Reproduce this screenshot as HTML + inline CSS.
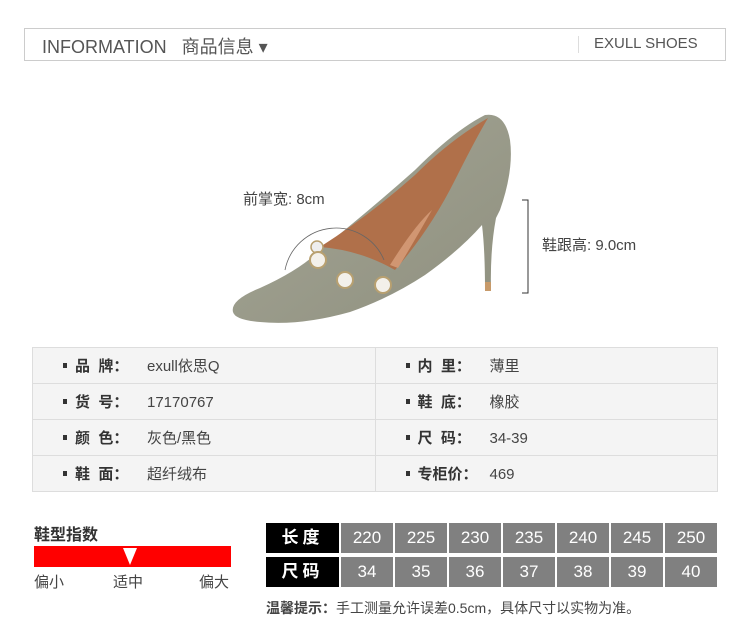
<!DOCTYPE html>
<html><head><meta charset="utf-8"><style>
*{margin:0;padding:0;box-sizing:border-box}
body{width:750px;height:642px;background:#fff;position:relative;font-family:"Liberation Sans","Noto Sans CJK SC",sans-serif;color:#555;overflow:hidden}
.a{position:absolute;white-space:nowrap}
.hdr{left:24px;top:28px;width:702px;height:33px;border:1px solid #ccc}
table.info{position:absolute;left:32px;top:347px;width:686px;border-collapse:collapse;background:#f4f4f4}
table.info td{border:1px solid #ddd;height:36px;font-size:15px;color:#444;padding-left:30px;width:343px}
table.info b{font-weight:bold;color:#333;display:inline-block;width:72px}
.sq{display:inline-block;width:4px;height:5px;background:#333;margin-right:8px;vertical-align:3px}
.c{position:absolute;height:30px;background:#808080;color:#fff;font-size:17px;text-align:center;line-height:30px;width:52px}
.k{position:absolute;height:30px;background:#000;color:#fff;font-size:17px;font-weight:bold;text-align:center;line-height:30px;width:73px;left:266px;letter-spacing:4px}
</style></head><body>
<div class="a hdr"></div>
<div class="a" style="left:42px;top:33px;font-size:18px;color:#555">INFORMATION&nbsp;&nbsp;&nbsp;商品信息 ▾</div>
<div class="a" style="left:578px;top:36px;width:1px;height:17px;background:#ddd"></div>
<div class="a" style="left:594px;top:35px;font-size:15px;color:#555">EXULL SHOES</div>

<svg class="a" style="left:200px;top:100px" width="460" height="240" viewBox="0 0 460 240">
<defs><linearGradient id="g" x1="0" y1="0" x2="1" y2="1"><stop offset="0" stop-color="#a5a696"/><stop offset="1" stop-color="#8f907f"/></linearGradient></defs>
<path d="M33 212 Q30 200 60 188 Q100 170 120 150 Q170 110 215 70 Q255 30 285 15 Q305 12 310 40 Q314 70 300 110 L296 118 Q290 150 291 190 L285 190 Q285 150 282 125 Q260 150 225 175 Q190 198 150 212 Q100 226 60 222 Q35 220 33 212Z" fill="url(#g)"/>
<path d="M120 147 Q160 150 195 170 Q230 130 255 80 Q275 40 288 18 Q250 40 215 75 Q170 115 120 147Z" fill="#b0704a"/>
<path d="M190 165 Q215 125 232 110 Q215 140 198 168Z" fill="#d19672"/>
<rect x="285" y="182" width="6" height="9" fill="#c79a6a"/>
<circle cx="117" cy="147" r="6" fill="#eee" stroke="#b8a070" stroke-width="1.5"/>
<circle cx="118" cy="160" r="8" fill="#f3f0ea" stroke="#b8a070" stroke-width="2"/>
<circle cx="145" cy="180" r="8" fill="#f3f0ea" stroke="#b8a070" stroke-width="2"/>
<circle cx="183" cy="185" r="8" fill="#f3f0ea" stroke="#b8a070" stroke-width="2"/>
<path d="M85 170 A52 52 0 0 1 184 160" fill="none" stroke="#666" stroke-width="0.8"/>
<path d="M322 100 L328 100 L328 193 L322 193" fill="none" stroke="#333" stroke-width="1"/>
</svg>
<div class="a" style="left:243px;top:188px;font-size:15px;color:#444">前掌宽: 8cm</div>
<div class="a" style="left:542px;top:234px;font-size:15px;color:#444">鞋跟高: 9.0cm</div>

<table class="info">
<tr><td><span class="sq"></span><b>品&nbsp;&nbsp;牌：</b>exull依思Q</td><td><span class="sq"></span><b>内&nbsp;&nbsp;里：</b>薄里</td></tr>
<tr><td><span class="sq"></span><b>货&nbsp;&nbsp;号：</b>17170767</td><td><span class="sq"></span><b>鞋&nbsp;&nbsp;底：</b>橡胶</td></tr>
<tr><td><span class="sq"></span><b>颜&nbsp;&nbsp;色：</b>灰色/黑色</td><td><span class="sq"></span><b>尺&nbsp;&nbsp;码：</b>34-39</td></tr>
<tr><td><span class="sq"></span><b>鞋&nbsp;&nbsp;面：</b>超纤绒布</td><td><span class="sq"></span><b>专柜价：</b>469</td></tr>
</table>

<div class="a" style="left:34px;top:521px;font-size:16px;font-weight:bold;color:#333">鞋型指数</div>
<div class="a" style="left:34px;top:546px;width:197px;height:21px;background:#f00"></div>
<svg class="a" style="left:123px;top:548px" width="14" height="17"><path d="M0 0 L14 0 L7 17Z" fill="#fff"/></svg>
<div class="a" style="left:34px;top:571px;font-size:15px;color:#444">偏小</div>
<div class="a" style="left:113px;top:571px;font-size:15px;color:#444">适中</div>
<div class="a" style="left:199px;top:571px;font-size:15px;color:#444">偏大</div>

<div class="k" style="top:523px">长度</div>
<div class="k" style="top:557px">尺码</div>
<div class="c" style="left:341px;top:523px">220</div><div class="c" style="left:395px;top:523px">225</div><div class="c" style="left:449px;top:523px">230</div><div class="c" style="left:503px;top:523px">235</div><div class="c" style="left:557px;top:523px">240</div><div class="c" style="left:611px;top:523px">245</div><div class="c" style="left:665px;top:523px">250</div>
<div class="c" style="left:341px;top:557px">34</div><div class="c" style="left:395px;top:557px">35</div><div class="c" style="left:449px;top:557px">36</div><div class="c" style="left:503px;top:557px">37</div><div class="c" style="left:557px;top:557px">38</div><div class="c" style="left:611px;top:557px">39</div><div class="c" style="left:665px;top:557px">40</div>
<div class="a" style="left:266px;top:598px;font-size:14px;color:#444"><b>温馨提示：</b>手工测量允许误差0.5cm，具体尺寸以实物为准。</div>
</body></html>
